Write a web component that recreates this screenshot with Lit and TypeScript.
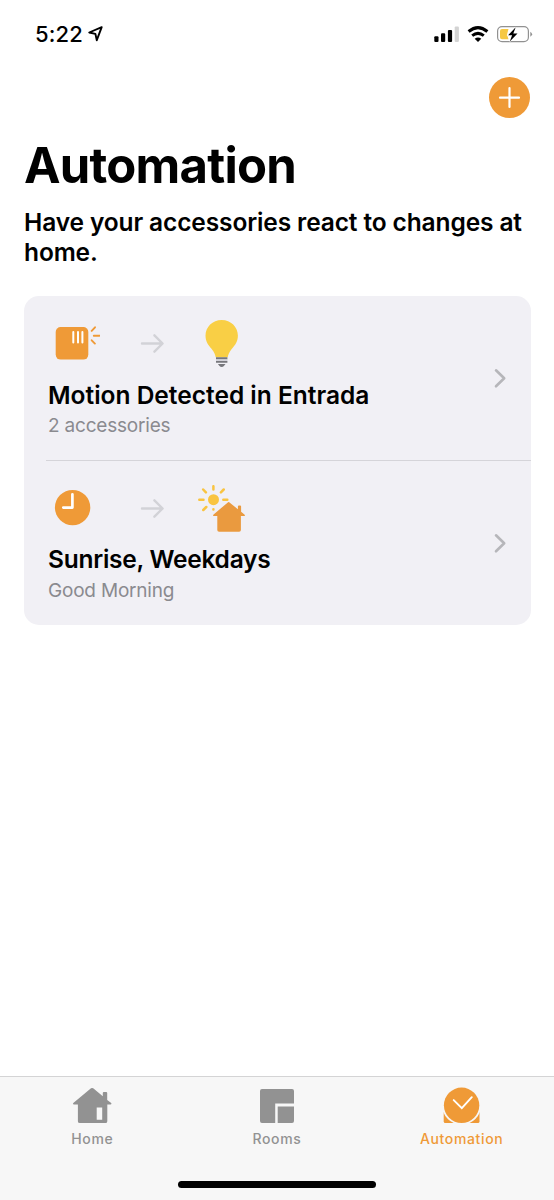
import { LitElement, html, svg, css } from "lit";
import { customElement, property } from "lit/decorators.js";

const motionIcon = svg`<svg class="lead" width="48" height="48" viewBox="52 320 48 48">
  <rect x="55.7" y="327" width="32.6" height="32.6" rx="5" fill="#ef9a37"/>
  <path d="M73.3 332v10.500M78 332v10.500M82.400 332v10.500" stroke="#fff" stroke-width="2" stroke-linecap="round"/>
  <path d="M91.700 330.900l3.300-3.600M93.800 335.700h5.700M91.700 340.300l3.200 3.300" stroke="#ef9a37" stroke-width="1.900" stroke-linecap="round" fill="none"/>
</svg>`;

const bulbIcon = svg`<svg width="50" height="48" viewBox="197 320 50 48">
  <path d="M221.700 320c-9.200 0-16.200 7-16.200 15.600 0 6.300 3 9.800 6 13.200 2.900 3.600 3.800 6.200 4.200 8.400h12c.4-2.200 1.300-4.800 4.200-8.400 3-3.400 6-6.900 6-13.200 0-8.600-7-15.600-16.200-15.600z" fill="#f9cf45"/>
  <path d="M216 358.200h11.400M216 361.900h11.400" stroke="#77777c" stroke-width="1.900"/>
  <path d="M216 360.100h11.400" stroke="#c9c9cf" stroke-width="1.500"/>
  <path d="M217.900 364h7.600l-1.600 2c-1 1.300-3.400 1.300-4.400 0z" fill="#77777c"/>
</svg>`;

const clockIcon = svg`<svg class="lead" width="48" height="48" viewBox="52 485 48 48">
  <circle cx="72.600" cy="507.600" r="17.700" fill="#ef9a37"/>
  <path d="M72.400 494.300v13.300h-9.100" stroke="#fff" stroke-width="2.700" stroke-linecap="round" stroke-linejoin="round" fill="none"/>
</svg>`;

const morningIcon = svg`<svg width="50" height="48" viewBox="197 485 50 48">
  <circle cx="213.500" cy="499.700" r="5.500" fill="#f9c440"/>
  <path d="M213.400 486.200v3.400M213.400 509.300v.3M199.300 499.800h4.200M223.300 499.800h4M203.200 489.500l2.700 2.800M223.700 489.500l-2.800 2.800M203.300 510l3-3" stroke="#f9c440" stroke-width="2.500" stroke-linecap="round"/>
  <path d="M229.200 502.200l8.700 7v-2.800q0-1 1-1h1.200q1 0 1 1v5.400l3.300 2.600q1.300 1.600-.5 1.600h-3v14q0 1.800-1.800 1.800h-20q-1.800 0-1.800-1.800v-14h-3.200q-1.800 0-.5-1.600l14.500-12.200q.8-.6 1.100 0z" fill="#ea9a3f"/>
</svg>`;

const homeIcon = svg`<svg width="44" height="40" viewBox="70 1086 44 40">
  <path fill-rule="evenodd" d="M91 1088.300q1.100-.8 2.200 0l9.600 7.900v-3.300q0-1 1-1h2.400q1 0 1 1v7l4 3.200q.8 1.200-.6 1.300h-3.300v16.800q0 1.900-1.900 1.900h-25.600q-1.900 0-1.900-1.900v-16.800h-4q-1.600-.1-.6-1.300zM96.700 1107.500v12.300h5.500v-12.300z" fill="#929292"/>
</svg>`;

const roomsIcon = svg`<svg width="44" height="40" viewBox="255 1086 44 40">
  <path d="M262 1089h30q2 0 2 2v12.400h-18.800v19.600h-13.200q-2 0-2-2v-30q0-2 2-2zM277.700 1106.600h16.300v14.400q0 2-2 2h-14.300z" fill="#929292"/>
</svg>`;

const automationIcon = svg`<svg width="44" height="40" viewBox="439.800 1086 44 40">
  <path d="M443.500 1112h35.800v9.400q0 1.600-1.600 1.600h-32.600q-1.600 0-1.600-1.600z" fill="#ef9a37"/>
  <circle cx="461.400" cy="1105.300" r="19.500" fill="#f7f7f7"/>
  <circle cx="461.400" cy="1105.300" r="17.700" fill="#ef9a37"/>
  <path d="M453.500 1100.100l8.100 8 10-10.900" stroke="#fff" stroke-width="1.900" stroke-linecap="round" fill="none"/>
</svg>`;

@customElement("status-bar")
class StatusBar extends LitElement {
  static styles = css`
    :host { display: flex; height: 68px; box-sizing: border-box; padding: 20px 21px 20px 35px; align-items: center; }
    .time { font-size: 22px; line-height: 28px; font-weight: 550; letter-spacing: 0.100px; width: 50px; }
    .loc { margin-left: 2px; }
    .signals { margin-left: auto; }
    svg { display: block; }
  `;
  render() {
    return html`
      <span class="time">5:22</span>
      <svg class="loc" width="18" height="20" viewBox="87 24 18 20">
        <path d="M101.700 27.200l-12.500 5.300 6.200 1.400 1.400 6.300z" fill="none" stroke="#000" stroke-width="1.900" stroke-linejoin="round"/>
      </svg>
      <svg class="signals" width="100" height="28" viewBox="433 20 100 28">
        <rect x="434.300" y="36.200" width="4.200" height="5.800" rx="1.100"/>
        <rect x="441" y="33.300" width="4.200" height="8.700" rx="1.100"/>
        <rect x="447.900" y="30" width="4.200" height="12" rx="1.100"/>
        <rect x="454.700" y="26.500" width="4.200" height="15.500" rx="1.100" fill="#d3d3d3"/>
        <path d="M468.600 31.500q9.400-7.800 18.800 0M472.200 35.600q5.800-4.500 11.600 0" fill="none" stroke="#000" stroke-width="3"/>
        <path d="M474.700 38.700q3.300-2.400 6.600 0l-3.300 3.300z"/>
        <rect x="497.600" y="26.700" width="30.800" height="15" rx="4.400" fill="none" stroke="#919191" stroke-width="1.200"/>
        <path d="M530.300 31.700q3.600 2.500 0 5z" fill="#919191"/>
        <path d="M502 29h6.500l-1.500 5.500 1.500 4.700h-6.500q-2 0-2-2v-6.200q0-2 2-2z" fill="#f6c843"/>
        <path d="M515.700 27.200l-7.600 8h4l-2.300 6.200 7.700-8h-4.200z" stroke="#fff" stroke-width="1.200" paint-order="stroke"/>
      </svg>
    `;
  }
}

@customElement("automation-row")
class AutomationRow extends LitElement {
  @property({ attribute: false }) trigger: unknown;
  @property({ attribute: false }) target: unknown;
  @property() name = "";
  @property() detail = "";
  static styles = css`
    :host { display: flex; height: 164.500px; box-sizing: border-box; padding: 24px 24px 0 24px; justify-content: space-between; }
    .icons { display: flex; align-items: center; height: 48px; margin-left: 4px; }
    .arrow { margin: 0 31px 0 39px; }
    .name { font-size: 24.500px; line-height: 30px; font-weight: 600; margin-top: 11.500px; letter-spacing: var(--name-track, 0); white-space: nowrap; }
    .detail { font-size: 19px; line-height: 24px; color: #8a8a8f; margin-top: 4.500px; letter-spacing: -0.200px; }
    .chevron { margin-top: 48px; }
    svg { display: block; }
  `;
  render() {
    return html`
      <div>
        <div class="icons">
          ${this.trigger}
          <svg class="arrow" width="27" height="24" viewBox="139 332 27 24">
            <path d="M142 343.500h20M154.400 335.300l8.200 8.200-8.200 8.200" fill="none" stroke="#d2d2d7" stroke-width="2.400" stroke-linecap="round" stroke-linejoin="round"/>
          </svg>
          ${this.target}
        </div>
        <div class="name">${this.name}</div>
        <div class="detail">${this.detail}</div>
      </div>
      <svg class="chevron" width="14" height="22" viewBox="493 368.200 14 22">
        <path d="M496 370.500l8.200 8-8.200 8" fill="none" stroke="#b6b6ba" stroke-width="2.600" stroke-linecap="round" stroke-linejoin="round"/>
      </svg>
    `;
  }
}

@customElement("tab-item")
class TabItem extends LitElement {
  @property({ attribute: false }) icon: unknown;
  @property() label = "";
  static styles = css`
    :host { display: flex; flex-direction: column; align-items: center; color: #929292; padding-top: 9px; }
    :host([active]) { color: #ef9a37; }
    .label { font-size: 14px; line-height: 18px; font-weight: 500; letter-spacing: 0.650px; margin-top: 4px; }
    svg { display: block; }
  `;
  render() {
    return html`${this.icon}<span class="label">${this.label}</span>`;
  }
}

@customElement("app-root")
class AppRoot extends LitElement {
  static styles = css`
    :host { display: flex; flex-direction: column; height: 1200px; width: 554px; background: #fff; color: #000; font-family: Inter, "Liberation Sans", sans-serif; overflow: hidden; }
    .toolbar { display: flex; justify-content: flex-end; box-sizing: border-box; padding: 9px 24px 0 0; height: 59px; }
    svg { display: block; }
    h1 { margin: 8.500px 24px 0; font-size: 49px; line-height: 60px; font-weight: 700; letter-spacing: -0.750px; }
    p { margin: 11.500px 20px 0 24px; font-size: 24.500px; line-height: 30px; font-weight: 600; letter-spacing: -0.120px; }
    .card { margin: 29px 23.500px 0 24px; background: #f1f0f5; border-radius: 15px; overflow: hidden; }
    .tight { --name-track: -0.250px; }
    .divider { height: 1px; margin: -0.500px 0 -0.500px 22px; background: #d5d4d9; }
    .tabs { margin-top: auto; height: 124px; box-sizing: border-box; border-top: 1px solid #d4d4d5; background: #f7f7f7; display: flex; flex-direction: column; }
    .items { display: grid; grid-template-columns: repeat(3, 1fr); height: 104px; }
    .indicator { width: 198px; height: 7px; border-radius: 4px; background: #000; align-self: center; }
  `;
  render() {
    return html`
      <status-bar></status-bar>
      <div class="toolbar">
        <svg width="41" height="42" viewBox="489 77 41 42">
          <circle cx="509.500" cy="97.500" r="20.500" fill="#ef9a37"/>
          <path d="M509.500 88v19M500 97.700h19" stroke="#fff" stroke-width="2.200" stroke-linecap="round"/>
        </svg>
      </div>
      <h1>Automation</h1>
      <p>Have your accessories react to changes at home.</p>
      <div class="card">
        <automation-row .trigger=${motionIcon} .target=${bulbIcon} name="Motion Detected in Entrada" detail="2 accessories"></automation-row>
        <div class="divider"></div>
        <automation-row class="tight" .trigger=${clockIcon} .target=${morningIcon} name="Sunrise, Weekdays" detail="Good Morning"></automation-row>
      </div>
      <div class="tabs">
        <div class="items">
          <tab-item .icon=${homeIcon} label="Home"></tab-item>
          <tab-item .icon=${roomsIcon} label="Rooms"></tab-item>
          <tab-item .icon=${automationIcon} label="Automation" active></tab-item>
        </div>
        <div class="indicator"></div>
      </div>
    `;
  }
}
